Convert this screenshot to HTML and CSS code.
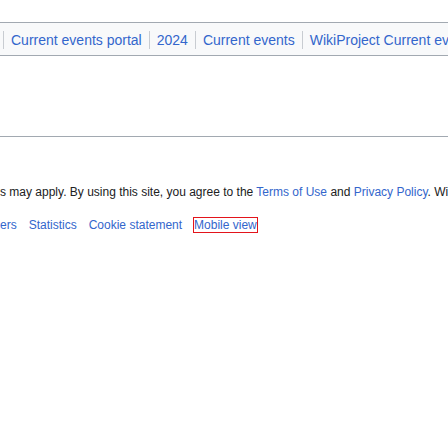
FILE: index.html
```html
<!DOCTYPE html>
<html lang="en">
<head>
<meta charset="utf-8">
<title>Current events</title>
<link rel="stylesheet" href="styles.css">
</head>
<body>
<div class="page">
  <nav class="navbox">
    <ul class="hlist">
      <li><a href="#">Current events portal</a></li>
      <li><a href="#">2024</a></li>
      <li><a href="#">Current events</a></li>
      <li><a href="#">WikiProject Current events</a></li>
    </ul>
  </nav>
  <div class="spacer"></div>
  <footer class="footer">
    <p class="info">s may apply. By using this site, you agree to the <a href="#">Terms of Use</a> and <a href="#" class="visited">Privacy Policy</a>. Wikipedia® is a registered trademark of the Wikimedia Foundation, Inc.</p>
    <ul class="places">
      <li><a href="#">ers</a></li>
      <li><a href="#">Statistics</a></li>
      <li><a href="#">Cookie statement</a></li>
      <li><a href="#" class="focused">Mobile view</a></li>
    </ul>
  </footer>
</div>
</body>
</html>
```

FILE: styles.css
```css
html, body {
  margin: 0;
  padding: 0;
  background: #ffffff;
  overflow: hidden;
}

.page {
  width: 448px;
  height: 448px;
  overflow: hidden;
  font-family: "Liberation Sans", Arial, sans-serif;
  color: #202122;
}

a {
  color: #3366cc;
  text-decoration: none;
}

.navbox {
  margin-top: 22px;
  background: #f8f9fa;
  border-top: 1px solid #a2a9b1;
  border-bottom: 1px solid #a2a9b1;
  padding: 8px 0 6px 3px;
  white-space: nowrap;
}

.hlist {
  list-style: none;
  margin: 0;
  padding: 0;
  display: flex;
  font-size: 14px;
  line-height: 18px;
}

.hlist li {
  border-left: 1px solid #c8ccd1;
  padding: 0 7px 0 7px;
  height: 18px;
  flex: none;
}

.spacer {
  height: 80px;
  border-bottom: 1px solid #a2a9b1;
}

.footer {
  padding-top: 46px;
  font-size: 12px;
  line-height: 18px;
  white-space: nowrap;
}

.info {
  margin: 0;
}

.visited {
  color: #3366cc;
}

.places {
  list-style: none;
  margin: 15px 0 0 0;
  padding: 0;
  display: flex;
  gap: 12px;
}

.places li {
  flex: none;
}

.focused {
  outline: 1px solid #e3141b;
}
```
